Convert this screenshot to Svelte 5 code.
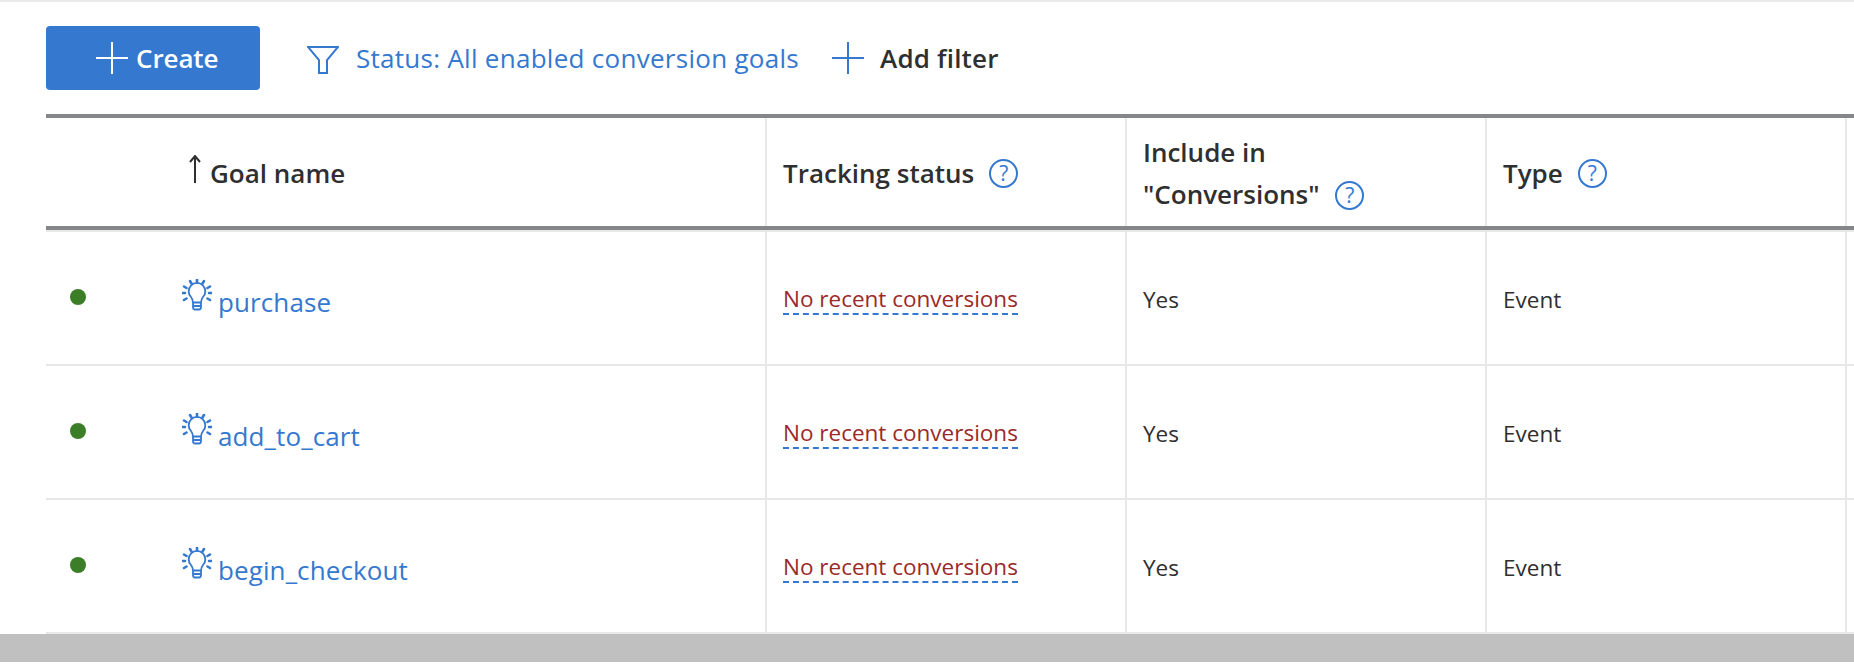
<script>
const goals = [
  { name: 'purchase' },
  { name: 'add_to_cart' },
  { name: 'begin_checkout' }
];
</script>

<div class="page">
  <div class="toolbar">
    <button class="create" type="button">
      <svg class="plus" viewBox="0 0 32 32"><path d="M16 0v32M0 16h32" /></svg>
      <span>Create</span>
    </button>
    <div class="status">
      <svg class="funnel" viewBox="0 0 32 28"><path d="M1 1h30L20 14v13h-8V14z" /></svg>
      <span>Status: All enabled conversion goals</span>
    </div>
    <div class="add">
      <svg class="plus" viewBox="0 0 32 32"><path d="M16 0v32M0 16h32" /></svg>
      <span>Add filter</span>
    </div>
  </div>

  <div class="table">
    <div class="head">
      <div class="cell goal-head">
        <svg class="arrow" viewBox="0 0 14 28"><path d="M7 28V1M2 7l5-6 5 6" /></svg>
        <span>Goal name</span>
      </div>
      <div class="cell">Tracking status <span class="help">?</span></div>
      <div class="cell">
        <span class="wrap">Include in<br />"Conversions" <span class="help">?</span></span>
      </div>
      <div class="cell">Type <span class="help">?</span></div>
    </div>

    {#each goals as goal}
      <div class="row">
        <div class="cell goal">
          <span class="dot"></span>
          <svg class="bulb" viewBox="0 0 30 32">
            <path d="M11 23.500c0-2.500-.5-3.500-2-5.500a8.300 8.300 0 1 1 12 0c-1.500 2-2 3-2 5.500zM11 23.500v4.500c0 1.500 1 2.500 2 2.500h4c1 0 2-1 2-2.500v-4.500M11.500 27h7" />
            <path class="rays" d="M15 .5v3M8 2l1.500 2.500M22 2l-1.500 2.500M2 7.500l2.500 1.500M28 7.500L25.500 9M.5 14H3M29.500 14H27M2 21l2.500-1.500M28 21l-2.500-1.500" />
          </svg>
          <span class="name">{goal.name}</span>
        </div>
        <div class="cell"><span class="tracking">No recent conversions</span></div>
        <div class="cell">Yes</div>
        <div class="cell">Event</div>
      </div>
    {/each}
  </div>

  <div class="band"></div>
</div>

<style>
:global(body) {
  margin: 0;
  background: #fff;
}

.page {
  width: 1854px;
  height: 670px;
  overflow: hidden;
  border-top: 2px solid #eaeaea;
  box-sizing: border-box;
  font-family: "Open Sans", sans-serif;
  color: #2f2f2f;
}

.toolbar {
  height: 112px;
  padding: 24px 0 0 46px;
  box-sizing: border-box;
  display: flex;
  align-items: flex-start;
}

.create {
  width: 214px;
  height: 64px;
  border: none;
  border-radius: 4px;
  background: #3578d0;
  color: #fff;
  font: 600 26px "Open Sans", sans-serif;
  letter-spacing: -0.1px;
  display: flex;
  align-items: center;
  padding: 0 0 0 50px;
  gap: 8px;
}

.plus {
  width: 32px;
  height: 32px;
  flex: none;
}

.plus path {
  fill: none;
  stroke: currentColor;
  stroke-width: 2;
}

.status {
  margin-left: 47px;
  height: 64px;
  display: flex;
  align-items: center;
  gap: 17px;
  color: #3578d0;
  font-size: 26px;
  letter-spacing: 0.28px;
}

.funnel {
  width: 32px;
  height: 28px;
  margin-top: 4px;
  flex: none;
}

.funnel path {
  fill: none;
  stroke: #3578d0;
  stroke-width: 2;
}

.add {
  margin-left: 33px;
  height: 64px;
  display: flex;
  align-items: center;
  gap: 16px;
  font-size: 26px;
  font-weight: 600;
  letter-spacing: 0.2px;
}

.add .plus {
  color: #3578d0;
}

.table {
  margin-left: 46px;
}

.head,
.row {
  display: grid;
  grid-template-columns: 721px 360px 360px 360px;
}

.head {
  height: 116px;
  box-sizing: border-box;
  border-top: 4px solid #85868a;
  border-bottom: 4px solid #85868a;
  font-size: 26px;
  font-weight: 600;
}

.head .cell {
  padding-top: 2px;
}

.row {
  height: 134px;
  box-sizing: border-box;
  border-bottom: 2px solid #e8e8e8;
  font-size: 22.5px;
}

.head + .row {
  height: 136px;
  border-top: 2px solid #e8e8e8;
}

.cell {
  padding-left: 16px;
  border-right: 2px solid #e8e8e8;
  display: flex;
  align-items: center;
  gap: 11px;
  box-sizing: border-box;
}

.row .cell {
  padding-top: 2px;
}

.wrap {
  line-height: 42px;
}

.help {
  display: inline-flex;
  align-items: center;
  justify-content: center;
  width: 29px;
  height: 29px;
  box-sizing: border-box;
  border: 2px solid #3578d0;
  border-radius: 50%;
  color: #3578d0;
  font-size: 21px;
  font-weight: 400;
  letter-spacing: 0;
  line-height: 1;
  margin-left: 4px;
}

.wrap .help {
  margin-left: 9px;
  vertical-align: 1px;
}

.goal-head {
  padding-left: 142px;
  gap: 8px;
}

.arrow {
  width: 14px;
  height: 28px;
  margin-top: -8px;
  flex: none;
}

.arrow path {
  fill: none;
  stroke: #2f2f2f;
  stroke-width: 2;
}

.row .goal {
  padding: 0 0 0 24px;
  gap: 0;
  color: #3578d0;
  font-size: 26px;
  letter-spacing: 0.1px;
}

.dot {
  width: 16px;
  height: 16px;
  border-radius: 50%;
  background: #3c7d27;
  margin-top: -2px;
  flex: none;
}

.bulb {
  width: 30px;
  height: 32px;
  margin: -6px 6px 0 96px;
  flex: none;
}

.bulb path {
  fill: none;
  stroke: #3578d0;
  stroke-width: 1.8;
  stroke-linecap: round;
}

.bulb .rays {
  stroke-width: 2.6;
}

.name {
  margin-top: 8px;
}

.tracking {
  color: #9a2a2a;
  border-bottom: 2px dashed #3578d0;
  line-height: 28px;
  margin-top: 2px;
}

.band {
  height: 28px;
  background: #c0c0c0;
}
</style>
